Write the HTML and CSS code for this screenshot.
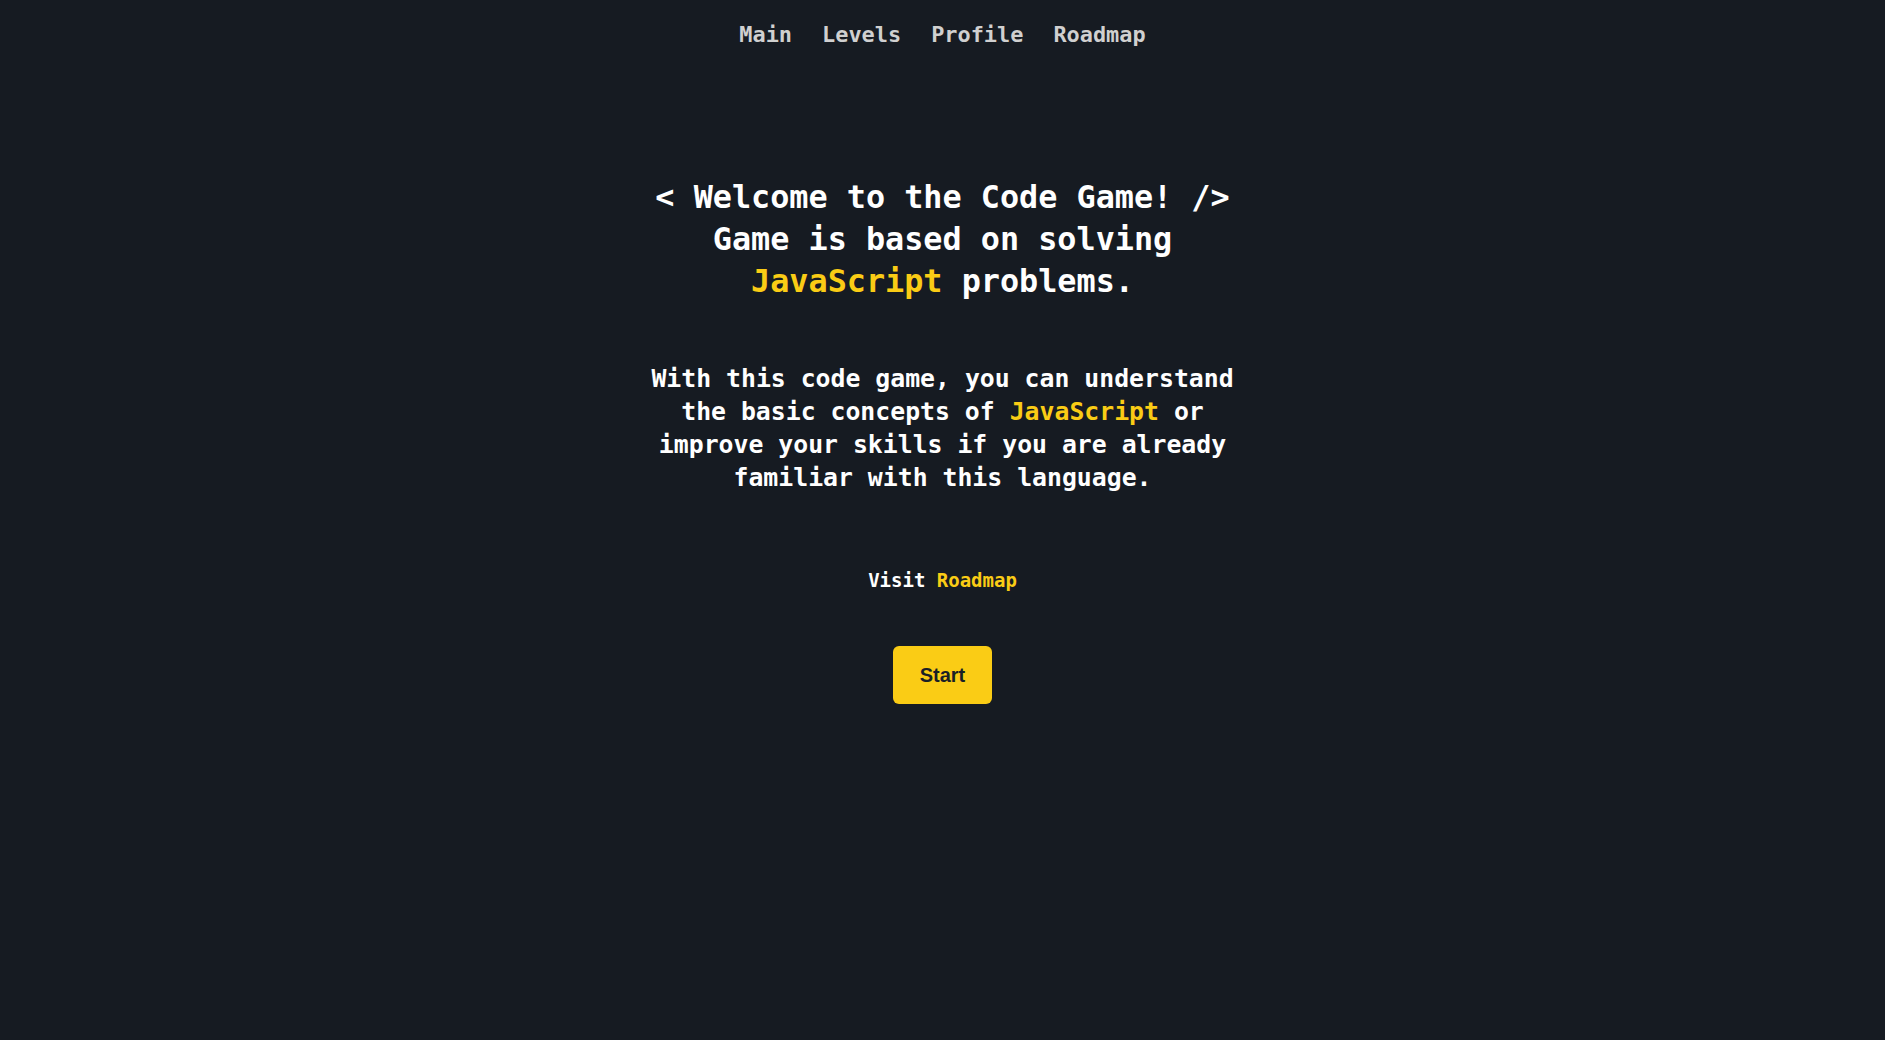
FILE: index.html
```html
<!DOCTYPE html>
<html lang="en">
<head>
<meta charset="utf-8">
<title>Code Game</title>
<link rel="stylesheet" href="styles.css">
</head>
<body>
<nav class="nav">
  <a class="nav-link" href="#">Main</a>
  <a class="nav-link" href="#">Levels</a>
  <a class="nav-link" href="#">Profile</a>
  <a class="nav-link" href="#">Roadmap</a>
</nav>
<main class="hero">
  <h1 class="title">&lt; Welcome to the Code Game! /&gt;<br>Game is based on solving <span class="accent">JavaScript</span> problems.</h1>
  <p class="lead">With this code game, you can understand the basic concepts of <span class="accent">JavaScript</span> or improve your skills if you are already familiar with this language.</p>
  <p class="visit">Visit <a class="accent link" href="#">Roadmap</a></p>
  <button class="start" type="button">Start</button>
</main>
</body>
</html>
```
FILE: styles.css
```css
html, body {
  margin: 0;
  padding: 0;
}
body {
  background: #161b22;
  color: #ffffff;
  font-family: "DejaVu Sans Mono", "Liberation Mono", monospace;
  min-height: 1040px;
}
.nav {
  display: flex;
  justify-content: center;
  gap: 30px;
  padding-top: 22px;
}
.nav-link {
  color: #d0d0d0;
  text-decoration: none;
  font-weight: 700;
  font-size: 21.9px;
  line-height: 26.4px;
}
.hero {
  display: flex;
  flex-direction: column;
  align-items: center;
  text-align: center;
  margin-top: 128px;
}
.title {
  width: 600px;
  margin: 0;
  font-size: 31.8px;
  line-height: 42px;
  font-weight: 700;
}
.accent {
  color: #facc15;
}
.link {
  text-decoration: none;
}
.lead {
  width: 600px;
  margin: 60px 0 0;
  font-size: 24.8px;
  line-height: 33px;
  font-weight: 700;
}
.visit {
  margin: 74px 0 0;
  font-size: 19px;
  line-height: 24px;
  font-weight: 700;
}
.start {
  margin-top: 54px;
  background: #facc15;
  color: #1a1f26;
  border: none;
  border-radius: 6px;
  padding: 17px 27px;
  font-family: "Liberation Sans", Arial, sans-serif;
  font-weight: 700;
  font-size: 20px;
  line-height: 24px;
  cursor: pointer;
}
```
